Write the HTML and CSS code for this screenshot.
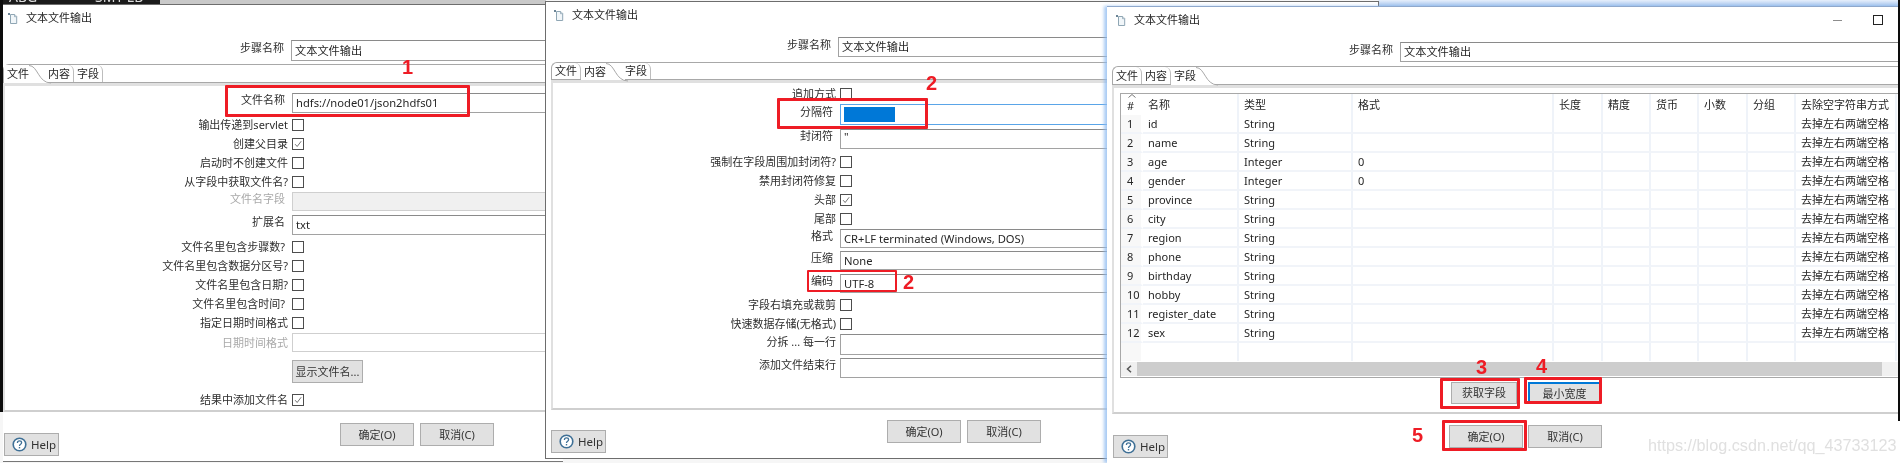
FILE: index.html
```html
<!DOCTYPE html>
<html lang="zh-CN">
<head>
<meta charset="utf-8">
<title>文本文件输出</title>
<link rel="stylesheet" href="styles.css">
</head>
<body>
<svg class="defs" width="0" height="0" aria-hidden="true">
  <symbol id="doc" viewBox="0 0 10 11">
    <path d="M2.5 1.5h4.2l2 2v7h-6.2z" fill="#f1f6f9" stroke="#8fa6b4" stroke-width="1"/>
    <path d="M6.5 1.5v2.2h2.2" fill="#dfe8ee" stroke="#8fa6b4" stroke-width=".8"/>
    <rect x="0" y="0" width="2" height="2" fill="#6b8496"/>
  </symbol>
  <symbol id="q" viewBox="0 0 15 15">
    <circle cx="7.5" cy="7.5" r="6.3" fill="#fff" stroke="#3f7096" stroke-width="1.6"/>
    <path d="M5.4 5.9c0-1.3 1-2 2.1-2 1.2 0 2.1.8 2.1 1.8 0 1.500-2.100 1.500-2.100 3.200" fill="none" stroke="#3f7096" stroke-width="1.300"/>
    <rect x="6.800" y="10" width="1.400" height="1.400" fill="#3f7096"/>
  </symbol>
  <symbol id="tick" viewBox="0 0 12 12">
    <path d="M2.500 6.200l2.500 2.800 4.800-6.300" fill="none" stroke="#666" stroke-width="1.100"/>
  </symbol>
  <symbol id="curve" viewBox="0 0 22 19">
    <path d="M0 .5c9 0 9 17.500 22 17.500" fill="none" stroke="#a8a8a8" stroke-width="1"/>
  </symbol>
</svg>

<div class="desk">
  <div class="bg-top"><span class="bg-word">ABG</span><span class="bg-word bg-word2">SMT LB</span></div>
  <div class="bg-grey"></div>
  <div class="bg-left"></div>
  <div class="bg-blue"></div>

  <section class="win w1">
    <header class="title"><svg class="doc"><use href="#doc"/></svg><span>文本文件输出</span></header>
    <div class="step"><span class="lab">步骤名称</span><div class="in">文本文件输出</div></div>
    <div class="folder">
      <div class="tabs">
        <span class="tab tab-on">文件<svg class="curve"><use href="#curve"/></svg></span>
        <span class="tab">内容</span>
        <span class="tab">字段</span>
      </div>
      <div class="panel">
        <div class="row h20"><span class="lab lab-in">文件名称</span><div class="in">hdfs://node01/json2hdfs01</div></div>
        <div class="row h19 mt2"><span class="lab">输出传递到servlet</span><span class="cb"></span></div>
        <div class="row h19"><span class="lab">创建父目录</span><span class="cb"><svg class="tick"><use href="#tick"/></svg></span></div>
        <div class="row h19"><span class="lab">启动时不创建文件</span><span class="cb"></span></div>
        <div class="row h19"><span class="lab">从字段中获取文件名?</span><span class="cb"></span></div>
        <div class="row h18 mt1"><span class="lab lab-in off">文件名字段</span><div class="in in-off"></div></div>
        <div class="row h20 mt5"><span class="lab lab-in">扩展名</span><div class="in">txt</div></div>
        <div class="row h19 mt2"><span class="lab lab-in2">文件名里包含步骤数?</span><span class="cb"></span></div>
        <div class="row h19"><span class="lab">文件名里包含数据分区号?</span><span class="cb"></span></div>
        <div class="row h19"><span class="lab">文件名里包含日期?</span><span class="cb"></span></div>
        <div class="row h19"><span class="lab lab-in2">文件名里包含时间?</span><span class="cb"></span></div>
        <div class="row h19"><span class="lab">指定日期时间格式</span><span class="cb"></span></div>
        <div class="row h19 mt1"><span class="lab off">日期时间格式</span><div class="in in-pale"></div></div>
        <div class="row h23 mt8"><span></span><button class="btn btn-file">显示文件名...</button></div>
        <div class="row h19 mt7"><span class="lab">结果中添加文件名</span><span class="cb"><svg class="tick"><use href="#tick"/></svg></span></div>
      </div>
    </div>
    <footer class="foot">
      <button class="btn btn-help"><svg class="q"><use href="#q"/></svg>Help</button>
      <button class="btn btn-main">确定(O)</button>
      <button class="btn btn-main">取消(C)</button>
    </footer>
  </section>

  <section class="win w2">
    <header class="title"><svg class="doc"><use href="#doc"/></svg><span>文本文件输出</span></header>
    <div class="step"><span class="lab">步骤名称</span><div class="in">文本文件输出</div></div>
    <div class="folder">
      <div class="tabs">
        <span class="tab">文件</span>
        <span class="tab tab-on">内容<svg class="curve"><use href="#curve"/></svg></span>
        <span class="tab">字段</span>
      </div>
      <div class="panel">
        <div class="row h19"><span class="lab">追加方式</span><span class="cb"></span></div>
        <div class="row h21 mt1"><span class="lab lab-in">分隔符</span><div class="in in-focus"><span class="sel"></span></div></div>
        <div class="row h20 mt4"><span class="lab lab-in">封闭符</span><div class="in in-top">"</div></div>
        <div class="row h19 mt3"><span class="lab">强制在字段周围加封闭符?</span><span class="cb"></span></div>
        <div class="row h19"><span class="lab">禁用封闭符修复</span><span class="cb"></span></div>
        <div class="row h19"><span class="lab">头部</span><span class="cb"><svg class="tick"><use href="#tick"/></svg></span></div>
        <div class="row h19"><span class="lab">尾部</span><span class="cb"></span></div>
        <div class="row h18 mt1"><span class="lab lab-in">格式</span><div class="in">CR+LF terminated (Windows, DOS)</div></div>
        <div class="row h18 mt4"><span class="lab lab-in">压缩</span><div class="in">None</div></div>
        <div class="row h18 mt5"><span class="lab lab-in">编码</span><div class="in">UTF-8</div></div>
        <div class="row h19 mt3"><span class="lab">字段右填充或裁剪</span><span class="cb"></span></div>
        <div class="row h19"><span class="lab">快速数据存储(无格式)</span><span class="cb"></span></div>
        <div class="row h21 mt1"><span class="lab lab-in3">分拆 ... 每一行</span><div class="in"></div></div>
        <div class="row h20 mt3"><span class="lab lab-in3">添加文件结束行</span><div class="in"></div></div>
      </div>
    </div>
    <footer class="foot">
      <button class="btn btn-help"><svg class="q"><use href="#q"/></svg>Help</button>
      <button class="btn btn-main">确定(O)</button>
      <button class="btn btn-main">取消(C)</button>
    </footer>
  </section>

  <section class="win w3">
    <header class="title">
      <svg class="doc"><use href="#doc"/></svg><span>文本文件输出</span>
      <div class="controls"><span class="ctl-min"></span><span class="ctl-max"></span></div>
    </header>
    <div class="step"><span class="lab">步骤名称</span><div class="in">文本文件输出</div></div>
    <div class="folder">
      <div class="tabs">
        <span class="tab">文件</span>
        <span class="tab">内容</span>
        <span class="tab tab-on">字段<svg class="curve"><use href="#curve"/></svg></span>
      </div>
      <div class="panel">
        <div class="grid-wrap">
          <table class="grid">
            <colgroup>
              <col class="c-n"><col class="c-name"><col class="c-type"><col class="c-fmt">
              <col class="c-len"><col class="c-pre"><col class="c-cur"><col class="c-dec"><col class="c-grp"><col class="c-trim">
            </colgroup>
            <thead>
              <tr><th class="num"><svg class="caret" viewBox="0 0 8 4"><path d="M.5 3.500L4 .5l3.500 3" fill="none" stroke="#777"/></svg>#</th><th>名称</th><th>类型</th><th>格式</th><th>长度</th><th>精度</th><th>货币</th><th>小数</th><th>分组</th><th>去除空字符串方式</th></tr>
            </thead>
            <tbody>
              <tr><td class="num">1</td><td>id</td><td>String</td><td></td><td></td><td></td><td></td><td></td><td></td><td>去掉左右两端空格</td></tr>
              <tr><td class="num">2</td><td>name</td><td>String</td><td></td><td></td><td></td><td></td><td></td><td></td><td>去掉左右两端空格</td></tr>
              <tr><td class="num">3</td><td>age</td><td>Integer</td><td>0</td><td></td><td></td><td></td><td></td><td></td><td>去掉左右两端空格</td></tr>
              <tr><td class="num">4</td><td>gender</td><td>Integer</td><td>0</td><td></td><td></td><td></td><td></td><td></td><td>去掉左右两端空格</td></tr>
              <tr><td class="num">5</td><td>province</td><td>String</td><td></td><td></td><td></td><td></td><td></td><td></td><td>去掉左右两端空格</td></tr>
              <tr><td class="num">6</td><td>city</td><td>String</td><td></td><td></td><td></td><td></td><td></td><td></td><td>去掉左右两端空格</td></tr>
              <tr><td class="num">7</td><td>region</td><td>String</td><td></td><td></td><td></td><td></td><td></td><td></td><td>去掉左右两端空格</td></tr>
              <tr><td class="num">8</td><td>phone</td><td>String</td><td></td><td></td><td></td><td></td><td></td><td></td><td>去掉左右两端空格</td></tr>
              <tr><td class="num">9</td><td>birthday</td><td>String</td><td></td><td></td><td></td><td></td><td></td><td></td><td>去掉左右两端空格</td></tr>
              <tr><td class="num">10</td><td>hobby</td><td>String</td><td></td><td></td><td></td><td></td><td></td><td></td><td>去掉左右两端空格</td></tr>
              <tr><td class="num">11</td><td>register_date</td><td>String</td><td></td><td></td><td></td><td></td><td></td><td></td><td>去掉左右两端空格</td></tr>
              <tr><td class="num">12</td><td>sex</td><td>String</td><td></td><td></td><td></td><td></td><td></td><td></td><td>去掉左右两端空格</td></tr>
              <tr class="blank"><td class="num"></td><td></td><td></td><td></td><td></td><td></td><td></td><td></td><td></td><td></td></tr>
            </tbody>
          </table>
          <div class="hscroll">
            <span class="hs-arrow"><svg viewBox="0 0 6 8" class="hs-icon"><path d="M5 .8L1.500 4 5 7.200" fill="none" stroke="#555" stroke-width="1.500"/></svg></span>
            <span class="hs-track"></span>
            <span class="hs-end"></span>
          </div>
        </div>
        <div class="grid-btns">
          <button class="btn btn-get">获取字段</button>
          <button class="btn btn-min">最小宽度</button>
        </div>
      </div>
    </div>
    <footer class="foot">
      <button class="btn btn-help"><svg class="q"><use href="#q"/></svg>Help</button>
      <button class="btn btn-main">确定(O)</button>
      <button class="btn btn-main">取消(C)</button>
    </footer>
  </section>

  <div class="bg-right"></div>

  <div class="box box-a"></div><div class="mark mark-a">1</div>
  <div class="box box-b"></div><div class="mark mark-b">2</div>
  <div class="box box-c"></div><div class="mark mark-c">2</div>
  <div class="box box-d"></div><div class="mark mark-d">3</div>
  <div class="box box-e"></div><div class="mark mark-e">4</div>
  <div class="box box-f"></div><div class="mark mark-f">5</div>
  <div class="watermark">https://blog.csdn.net/qq_43733123</div>
</div>
</body>
</html>
```

FILE: styles.css
```css
* { box-sizing: border-box; }
html, body { margin: 0; padding: 0; background: #fff; }
.defs { position: absolute; }

.desk {
  position: relative;
  width: 1900px;
  height: 463px;
  overflow: hidden;
  background: #f6f6f6;
  font: 11px/1.2 "Noto Sans", "Noto Sans CJK SC", sans-serif;
  color: #262626;
  filter: blur(.35px);
}

/* what is visible of the desktop behind the windows */
.bg-top { position: absolute; left: 0; top: 0; width: 160px; height: 5px; background: #1b1b1b; overflow: hidden; color: #ddd; font-size: 14px; line-height: 14px; }
.bg-word { position: absolute; left: 9px; top: -10px; }
.bg-word2 { left: 95px; }
.bg-grey { position: absolute; left: 160px; top: 0; width: 386px; height: 5px; background: #c9c9c9; }
.bg-left { position: absolute; left: 0; top: 0; width: 3px; height: 412px; background: #0c0c0c; }
.bg-blue { position: absolute; left: 1378px; top: 0; width: 522px; height: 7px; background: linear-gradient(#e6effb, #9dbfec); }
.bg-right { position: absolute; left: 1898px; top: 0; width: 2px; height: 421px; background: #0c0c0c; }

/* windows on the desktop */
.win { position: absolute; background: #fff; display: flex; flex-direction: column; overflow: hidden; border-top: 1px solid #6d6d6d; }
.w1 { left: 3px; top: 4px; width: 560px; height: 458px; border-bottom: 1px solid #777; }
.w2 { left: 545px; top: 1px; width: 834px; height: 458px; border: 1px solid #6d6d6d; }
.w3 { left: 1107px; top: 6px; width: 793px; height: 457px; border-top-color: #8fa8cc; box-shadow: -3px 0 3px rgba(140, 185, 240, .75); }

.title { flex: none; display: flex; align-items: center; height: 26px; margin-bottom: 9px; }
.doc { width: 10px; height: 11px; margin-right: 8px; }
.w1 .title { padding-left: 5px; }
.w2 .title { padding-left: 8px; }
.w3 .title { padding-left: 9px; }
.controls { display: flex; align-items: center; margin-left: auto; margin-right: 17px; gap: 31px; }
.ctl-min { width: 9px; height: 1px; background: #8d8d8d; }
.ctl-max { width: 10px; height: 10px; border: 1px solid #222; }

.step { flex: none; display: grid; align-items: center; column-gap: 7px; height: 21px; }
.w1 .step { grid-template-columns: 281px 1fr; }
.w2 .step { grid-template-columns: 285px 1fr; height: 20px; }
.w3 .step { grid-template-columns: 286px 1fr; height: 20px; }
.step .lab { padding-bottom: 5px; }

.lab { text-align: right; white-space: nowrap; color: #2e2e2e; }
.lab-in { padding-right: 3px; padding-bottom: 6px; }
.lab-in2 { padding-right: 3px; }
.lab-in3 { padding-bottom: 6px; }
.lab.off { color: #a9a9a9; }

.in { height: 100%; border: 1px solid #a2a2a2; border-top-color: #8a8a8a; padding-left: 3px; background: #fff; display: flex; align-items: center; white-space: nowrap; font-size: 11.2px; }
.in-off { background: #f0f0f0; border-color: #cfcfcf; }
.in-pale { border-color: #cfcfcf; }
.in-focus { border-color: #5aa5e8; }
.in-top { align-items: flex-start; }
.sel { width: 51px; height: 15px; background: #0078d7; }

.folder { flex: none; }
.w1 .folder { margin-top: 3px; margin-left: 0; }
.w2 .folder { margin-top: 5px; margin-left: 5px; }
.w3 .folder { margin-top: 4px; margin-left: 5px; }

.tabs { display: flex; height: 19px; border: 1px solid #a8a8a8; border-right: 0; border-radius: 6px 0 0 0; }
.w2 .tabs { height: 18px; }
.tab { position: relative; padding: 0 3px; display: flex; align-items: center; border-right: 1px solid #bdbdbd; border-top-right-radius: 6px; }
.tab-on { padding-right: 19px; border-right: 0; margin-bottom: -1px; background: #fff; }
.tab-on + .tab { padding-left: 0; }
.curve { position: absolute; right: -3px; top: 0; width: 22px; height: 19px; }

.panel { border: 2px solid #e0e0e0; border-top-width: 3px; border-bottom-color: #cfcfcf; }
.w1 .panel { height: 329px; padding-top: 7px; }
.w2 .panel { height: 330px; padding-top: 1px; }
.w3 .panel { height: 329px; padding-top: 5px; padding-left: 6px; border-right: 0; }

.row { display: grid; grid-template-columns: 283px 1fr; column-gap: 4px; align-items: center; }
.h18 { height: 18px; }
.h19 { height: 19px; }
.h20 { height: 20px; }
.h21 { height: 21px; }
.h23 { height: 23px; }
.mt1 { margin-top: 1px; }
.mt2 { margin-top: 2px; }
.mt3 { margin-top: 3px; }
.mt4 { margin-top: 4px; }
.mt5 { margin-top: 5px; }
.mt7 { margin-top: 7px; }
.mt8 { margin-top: 8px; }

.cb { width: 12px; height: 12px; border: 1px solid #4d4d4d; background: #fff; display: block; }
.tick { width: 10px; height: 10px; display: block; }

.btn { height: 23px; padding: 0; border: 1px solid #adadad; background: #e1e1e1; color: #333; font: inherit; white-space: nowrap; }
.btn-file { width: 71px; }
.btn-main { width: 74px; }
.btn-get { width: 66px; height: 22px; }
.btn-min { width: 72px; height: 22px; border-color: #0078d7 #adadad #adadad #0078d7; border-width: 2px 1px 1px 2px; }
.btn-help { width: 55px; display: flex; align-items: center; padding-left: 7px; gap: 4px; font-size: 11.5px; }
.q { width: 15px; height: 15px; }

.foot { display: flex; align-items: flex-start; flex: none; gap: 6px; }
.foot .btn-help { margin-top: 10px; }
.w1 .foot { margin-top: 11px; padding-left: 1px; }
.w2 .foot { margin-top: 10px; padding-left: 5px; }
.w3 .foot { margin-top: 11px; padding-left: 6px; }
.foot .btn-help { margin-right: 275px; }
.w3 .foot .btn-main:last-child { margin-left: -1px; }

/* fields table */
.grid-wrap { border: 1px solid #a8a8a8; border-right: 0; }
.grid { table-layout: fixed; border-collapse: separate; border-spacing: 0; width: 776px; }
.c-n { width: 22px; }
.c-name { width: 96px; }
.c-type { width: 114px; }
.c-fmt { width: 201px; }
.c-len, .c-dec { width: 49px; }
.c-pre, .c-cur, .c-grp { width: 48px; }
.c-trim { width: 101px; }
.grid th, .grid td { padding: 0 0 0 5px; text-align: left; font-weight: 400; white-space: nowrap; overflow: hidden; border-right: 2px solid #eff3f9; }
.grid th { height: 21px; position: relative; }
.grid td { height: 19px; border-bottom: 2px solid #f1f4f9; }
.grid .num { background: #f8f8f8; border-right-color: #fff; padding-left: 6px; }
.grid th.num { background: #fff; padding-top: 3px; }
.caret { position: absolute; left: 7px; top: 0; width: 8px; height: 4px; }
.blank td { height: 18px; border-bottom: 0; }

.hscroll { display: flex; height: 14px; margin: 1px 0 1px; }
.hs-arrow { width: 16px; display: flex; align-items: center; justify-content: center; background: #f0f0f0; }
.hs-icon { width: 6px; height: 8px; }
.hs-track { width: 745px; background: #cdcdcd; }
.hs-end { flex: 1; background: #f0f0f0; }

.grid-btns { display: flex; gap: 11px; margin: 4px 0 0 331px; }

/* red review annotations over the windows */
.box { position: absolute; border: 3px solid #ee1c25; border-radius: 1px; }
.box-a { left: 225px; top: 85px; width: 245px; height: 32px; }
.box-b { left: 777px; top: 98px; width: 151px; height: 31px; }
.box-c { left: 807px; top: 270px; width: 90px; height: 22px; border-width: 2px; }
.box-d { left: 1440px; top: 378px; width: 80px; height: 31px; }
.box-e { left: 1524px; top: 377px; width: 78px; height: 27px; }
.box-f { left: 1442px; top: 420px; width: 85px; height: 31px; }
.mark { position: absolute; font: 700 20px/20px "Liberation Sans", sans-serif; color: #ee1c25; }
.mark-a { left: 402px; top: 57px; }
.mark-b { left: 926px; top: 73px; }
.mark-c { left: 903px; top: 272px; }
.mark-d { left: 1476px; top: 357px; }
.mark-e { left: 1536px; top: 356px; }
.mark-f { left: 1412px; top: 425px; }
.watermark { position: absolute; left: 1648px; top: 434px; font: 16.2px/22px "Liberation Sans", sans-serif; color: #e0e0e0; white-space: nowrap; }
```
